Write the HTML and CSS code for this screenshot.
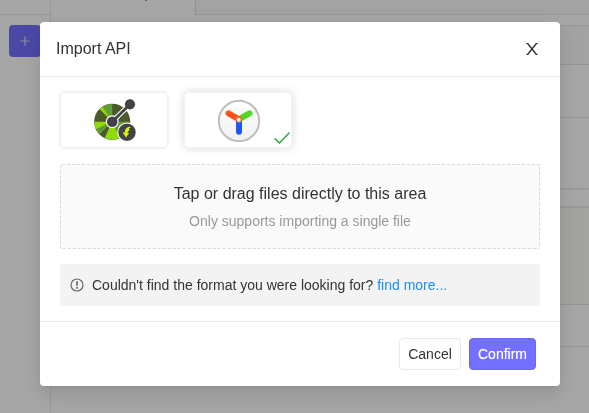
FILE: index.html
```html
<!DOCTYPE html>
<html lang="en">
<head>
<meta charset="utf-8">
<title>Import API</title>
<link rel="stylesheet" href="styles.css">
</head>
<body>
<div class="app">
  <aside class="side"><div class="side-top"></div><button class="add" aria-label="Add"><svg width="10" height="10" viewBox="0 0 10 10"><path d="M5 .5v9M.5 5h9" stroke="#dddcfa" stroke-width="1.1"/></svg></button></aside>
  <main class="main">
    <div class="tabs"><div class="tab"><i class="tab-mark"></i></div><div class="tab-rest"></div></div>
    <div class="panel first"><div class="row head"></div><div class="row mid"></div><div class="row tall"></div></div>
    <div class="panel second"><div class="row code"></div><div class="row foot"></div></div>
  </main>
</div>
<div class="overlay">
  <section class="modal">
    <header class="header"><h1>Import API</h1>
      <svg class="close" width="12" height="12" viewBox="0 0 12 12" fill="none" stroke="#333" stroke-width="1.4"><path d="M1.6.5l8.8 11M10.4.5l-8.8 11"/><path d="M.4.5h1.8M9.8.5h1.8M.4 11.5h1.8M9.8 11.5h1.8" stroke-width="1"/></svg>
    </header>
    <div class="body">
      <div class="cards">
        <div class="card">
          <svg width="44" height="44" viewBox="92 98 44 44" fill="none">
            <g transform="rotate(-90 112.2 121.7)" stroke-width="18">
              <circle cx="112.2" cy="121.7" r="9" stroke="#4c5a2b"/>
              <circle cx="112.2" cy="121.7" r="9" pathLength="360" stroke="#629b3b" stroke-dasharray="32 328" stroke-dashoffset="-328"/>
              <circle cx="112.2" cy="121.7" r="9" pathLength="360" stroke="#93d500" stroke-dasharray="13 347" stroke-dashoffset="-315"/>
              <circle cx="112.2" cy="121.7" r="9" pathLength="360" stroke="#8fda08" stroke-dasharray="26 334" stroke-dashoffset="-244"/>
              <circle cx="112.2" cy="121.7" r="9" pathLength="360" stroke="#629b3b" stroke-dasharray="19 341" stroke-dashoffset="-225"/>
              <circle cx="112.2" cy="121.7" r="9" pathLength="360" stroke="#8fda08" stroke-dasharray="50 310" stroke-dashoffset="-155"/>
              <circle cx="112.2" cy="121.7" r="9" pathLength="360" stroke="#629b3b" stroke-dasharray="65 295" stroke-dashoffset="-90"/>
            </g>
            <path d="M112.2 121.7L130 104.3" stroke="#fff" stroke-width="5"/>
            <circle cx="112.2" cy="121.7" r="6.5" fill="#fff"/>
            <circle cx="130" cy="104.3" r="6.2" fill="#fff"/>
            <path d="M112.2 121.7L130 104.3" stroke="#434347" stroke-width="2.8"/>
            <circle cx="112.2" cy="121.7" r="5.3" fill="#434347"/>
            <circle cx="130" cy="104.3" r="5.1" fill="#434347"/>
            <circle cx="127" cy="132.2" r="9.8" fill="#fff"/>
            <circle cx="127" cy="132.2" r="8.7" fill="#434347"/>
            <path d="M130.8 126.9c-4-.4-6 2.4-6 5.5l-2.2.2 3.4 4.9 3.2-4.6-1.7-.2c.2-1.2.8-2 2-2.3l-.5-1.7z" fill="#d9f500"/>
          </svg>
        </div>
        <div class="card selected">
          <svg width="44" height="44" viewBox="0 0 44 44" fill="none">
            <defs><linearGradient id="disc" x2="0" y2="1"><stop stop-color="#fff"/><stop offset="1" stop-color="#f0f0f0"/></linearGradient></defs>
            <circle cx="23" cy="23" r="20.2" fill="url(#disc)" stroke="#bdbdbd" stroke-width="1.9"/>
            <g stroke-width="6" stroke-linecap="round"><path d="M23 22v11.7" stroke="#1f58f5"/><path d="M23 21.3l10.5-6" stroke="#55d528"/><path d="M23 21.3l-10.5-6" stroke="#ff5419"/></g>
            <circle cx="22.8" cy="21.8" r="2.1" fill="#fff" stroke="#ff9470" stroke-width=".9"/>
          </svg>
          <svg class="check" width="16" height="12" viewBox="0 0 16 12" fill="none"><path d="M.5 6.2l5 4.8L15.5.6" stroke="#20a53f" stroke-width="1.4"/></svg>
        </div>
      </div>
      <div class="drop"><p class="drop-title">Tap or drag files directly to this area</p><p class="drop-hint">Only supports importing a single file</p></div>
      <div class="notice">
        <svg width="14" height="14" viewBox="0 0 14 14" fill="none" stroke="#666"><circle cx="7" cy="7" r="6" stroke-width="1.2"/><path d="M7 3.3v4.5M7 9v1.7" stroke-width="1.7"/></svg>
        <p>Couldn't find the format you were looking for? <a>find more...</a></p>
      </div>
    </div>
    <footer class="footer"><button class="btn">Cancel</button><button class="btn primary">Confirm</button></footer>
  </section>
</div>
</body>
</html>
```
FILE: styles.css
```css
* { box-sizing: border-box; }
body { margin: 0; height: 413px; overflow: hidden; font-family: "Liberation Sans", Arial, sans-serif; font-size: 14px; color: #333; }
h1, p { margin: 0; font-weight: 400; }
button { font: inherit; padding: 0; }
.app { display: flex; width: 589px; height: 413px; background: #fff; }
.side { width: 51px; border-right: 1px solid #e8e8e8; }
.side-top { height: 15px; border-bottom: 1px solid #e8e8e8; }
.add { display: flex; align-items: center; justify-content: center; width: 32px; height: 32px; margin: 10px 0 0 9px; border: 0; border-radius: 4px; background: #7370ff; }
.main { flex: 1; }
.tabs { display: flex; height: 15px; }
.tab { width: 145px; border-right: 1px solid #e0e0e0; }
.tab-mark { display: block; width: 2px; height: 1px; margin-left: 94px; background: #b98a3c; }
.tab-rest { flex: 1; background: #fafafa; border-bottom: 1px solid #e5e5e5; }
.panel { border-top: 1px solid #e5e5e5; }
.first { margin-top: 10px; border-bottom: 2px solid #ececec; }
.second { margin-top: 16px; border-top: 2px solid #ececec; }
.row { border-bottom: 1px solid #e5e5e5; }
.head { height: 39px; background: #fafafa; }
.mid { height: 53px; }
.tall { height: 70px; border: 0; }
.code { height: 97px; background: #fbfbf7; }
.foot { height: 42px; }
.overlay { position: fixed; inset: 0; padding: 22px 29px 27px 40px; background: rgba(0, 0, 0, .35); }
.modal { width: 520px; height: 364px; background: #fff; border-radius: 4px; box-shadow: 0 3px 6px -4px rgba(0, 0, 0, .12), 0 6px 16px rgba(0, 0, 0, .08), 0 9px 28px 8px rgba(0, 0, 0, .05); }
.header { display: flex; align-items: center; justify-content: space-between; height: 55px; padding: 0 22px 0 16px; border-bottom: 1px solid #ebebeb; }
.header h1 { font-size: 16px; line-height: 22px; }
.body { height: 244px; padding: 15px 20px 0; }
.cards { display: flex; gap: 16px; }
.card { position: relative; display: flex; align-items: center; justify-content: center; width: 108px; height: 56px; border: 1px solid #f0f0f0; border-radius: 5px; box-shadow: 0 0 3px rgba(0, 0, 0, .12); }
.selected { border-color: #f4f4f4; box-shadow: 0 0 10px rgba(0, 0, 0, .16); }
.check { position: absolute; right: 1px; bottom: 3px; }
.drop { height: 85px; margin-top: 16px; padding-top: 17px; text-align: center; background: #fafafa; border: 1px dashed #d9d9d9; border-radius: 2px; }
.drop-title { font-size: 16px; line-height: 24px; }
.drop-hint { margin-top: 4px; line-height: 22px; color: #999; }
.notice { display: flex; align-items: center; gap: 8px; height: 42px; margin-top: 15px; padding: 0 10px; background: #f3f3f3; border-radius: 4px; }
.notice a { color: #1890ff; }
.footer { display: flex; justify-content: flex-end; gap: 8px; height: 65px; padding: 16px 24px; border-top: 1px solid #ebebeb; }
.btn { width: 62px; height: 32px; background: #fff; border: 1px solid #e8e8e8; border-radius: 4px; color: #333; }
.primary { width: 67px; background: #7370ff; border-color: #6966f0; color: #fff; text-shadow: 0 0 1px rgba(255, 255, 255, .6); }
```
